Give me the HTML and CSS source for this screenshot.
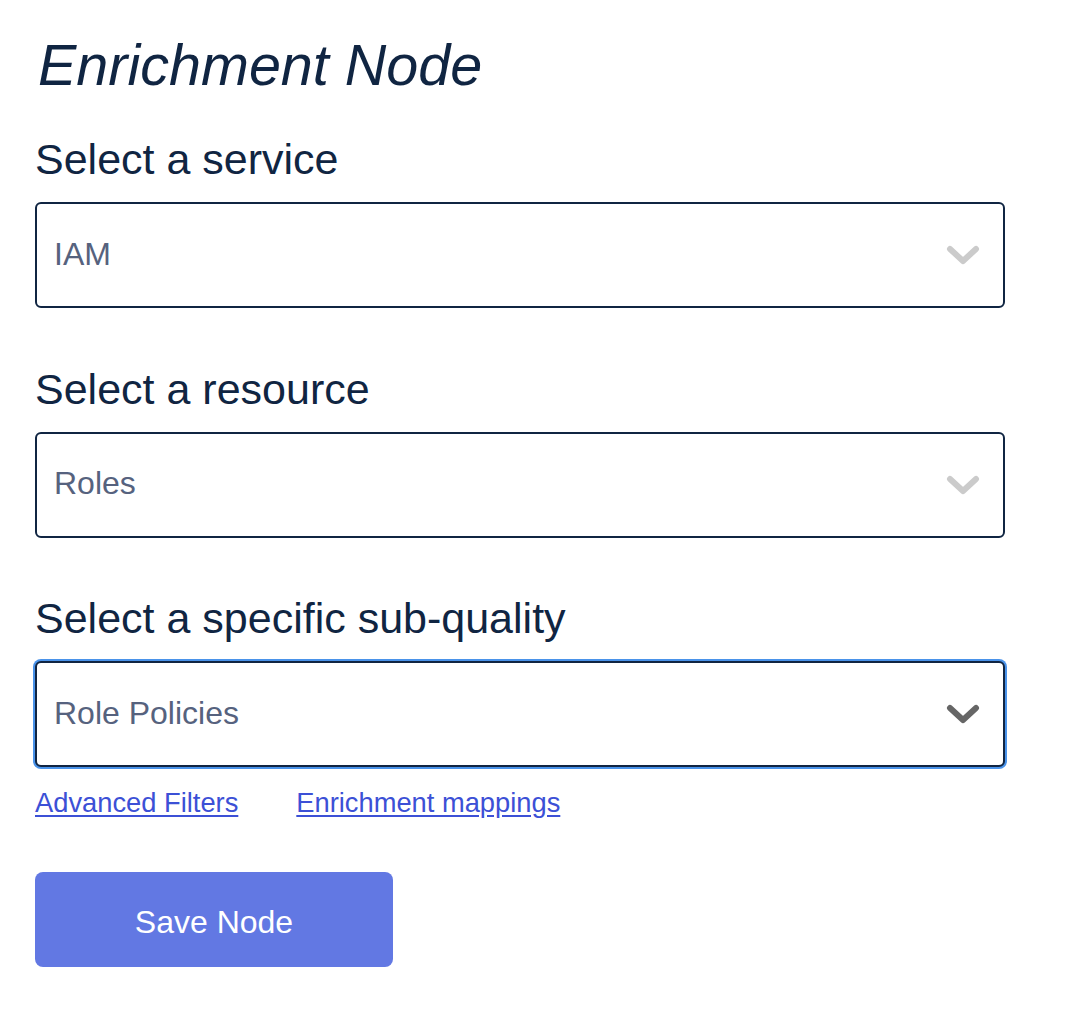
FILE: index.html
```html
<!DOCTYPE html>
<html lang="en">
<head>
<meta charset="utf-8">
<title>Enrichment Node</title>
<link rel="stylesheet" href="styles.css">
</head>
<body>
<main class="panel">
  <h1 class="title">Enrichment Node</h1>

  <section class="field">
    <label class="field-label">Select a service</label>
    <div class="select">
      <span class="select-value">IAM</span>
      <svg class="chevron chevron-light" width="34" height="22" viewBox="0 0 34 22"><polyline points="4,5 17,17 30,5" fill="none" stroke-width="6" stroke-linecap="round" stroke-linejoin="round"/></svg>
    </div>
  </section>

  <section class="field">
    <label class="field-label">Select a resource</label>
    <div class="select">
      <span class="select-value">Roles</span>
      <svg class="chevron chevron-light" width="34" height="22" viewBox="0 0 34 22"><polyline points="4,5 17,17 30,5" fill="none" stroke-width="6" stroke-linecap="round" stroke-linejoin="round"/></svg>
    </div>
  </section>

  <section class="field">
    <label class="field-label">Select a specific sub-quality</label>
    <div class="select select-focused">
      <span class="select-value">Role Policies</span>
      <svg class="chevron chevron-dark" width="34" height="22" viewBox="0 0 34 22"><polyline points="4,5 17,17 30,5" fill="none" stroke-width="6" stroke-linecap="round" stroke-linejoin="round"/></svg>
    </div>
  </section>

  <nav class="links">
    <a href="#" class="link">Advanced Filters</a>
    <a href="#" class="link">Enrichment mappings</a>
  </nav>

  <button class="save-btn" type="button">Save Node</button>
</main>
</body>
</html>
```

FILE: styles.css
```css
html, body {
  margin: 0;
  padding: 0;
  background: #ffffff;
}

body {
  font-family: "Liberation Sans", Arial, Helvetica, sans-serif;
  color: #102542;
}

.panel {
  padding: 30px 0 40px 35px;
  width: 970px;
}

.title {
  margin: 0 0 34px 3px;
  font-size: 57.5px;
  line-height: 70px;
  font-style: italic;
  font-weight: 400;
  color: #102542;
}

.field {
  display: flex;
  flex-direction: column;
  margin-bottom: 55.5px;
}

.field:last-of-type {
  margin-bottom: 0;
}

.field-label {
  font-size: 43px;
  line-height: 50px;
  margin: 0 0 18px 0;
  color: #102542;
}

.select {
  box-sizing: border-box;
  height: 106px;
  border: 2px solid #102542;
  border-radius: 6px;
  display: flex;
  align-items: center;
  justify-content: space-between;
  padding: 0 23px 0 17px;
  background: #ffffff;
}

.select-focused {
  box-shadow: 0 0 0 2px #4a93ea;
}

.select-value {
  font-size: 32px;
  color: #56627e;
  padding-bottom: 2px;
}

.chevron {
  display: block;
}

.chevron-light polyline {
  stroke: #cbcbcb;
}

.chevron-dark polyline {
  stroke: #666666;
}

.links {
  display: flex;
  gap: 58px;
  margin-top: 20px;
}

.link {
  font-size: 27.3px;
  line-height: 32px;
  color: #3c50d6;
  text-decoration: underline;
  text-underline-offset: 3px;
}

.save-btn {
  margin-top: 53px;
  width: 358px;
  height: 95px;
  padding: 6px 0 0 0;
  border: none;
  border-radius: 8px;
  background: #6278e3;
  color: #ffffff;
  font-family: "Liberation Sans", Arial, Helvetica, sans-serif;
  font-size: 32px;
  cursor: pointer;
}
```
